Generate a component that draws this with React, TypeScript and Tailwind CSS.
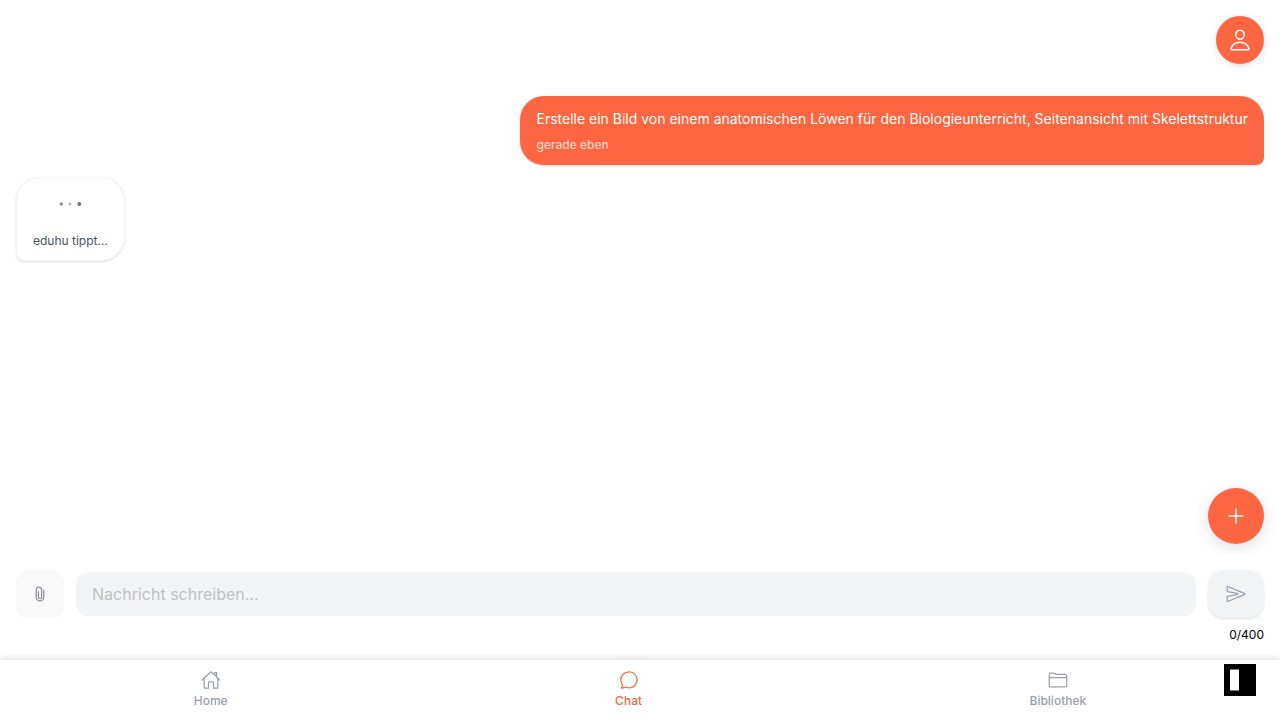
import { useState } from 'react'
import type { ComponentType } from 'react'
import {
  IoAddOutline,
  IoAttachOutline,
  IoChatbubbleOutline,
  IoFolderOutline,
  IoHomeOutline,
  IoPersonOutline,
  IoSendOutline,
} from 'react-icons/io5'

type Tab = {
  label: string
  href: string
  icon: ComponentType<{ className?: string }>
  active?: boolean
}

const tabs: Tab[] = [
  { label: 'Home', href: '#home', icon: IoHomeOutline },
  { label: 'Chat', href: '#chat', icon: IoChatbubbleOutline, active: true },
  { label: 'Bibliothek', href: '#bibliothek', icon: IoFolderOutline },
]

const MAX_LENGTH = 400

function UserMessage({ text, time }: { text: string; time: string }) {
  return (
    <div className="self-end rounded-3xl rounded-br-lg bg-[#fd6642] px-4 py-3 text-white shadow-sm">
      <p className="text-sm leading-[22px]">{text}</p>
      <p className="mt-1.5 text-xs leading-[17px] font-medium opacity-70">{time}</p>
    </div>
  )
}

function TypingIndicator() {
  return (
    <div className="flex flex-col items-center self-start rounded-3xl rounded-bl-lg border border-gray-100 bg-white px-4 pt-3 pb-2.5 shadow-sm">
      <svg className="h-7 w-7" viewBox="0 0 28 28" aria-hidden="true">
        <circle cx="5.3" cy="14" r="1.7" fill="#8c8c8c" />
        <circle cx="14" cy="14" r="1.5" fill="#b5b5b5" />
        <circle cx="23.3" cy="14" r="2" fill="#777777" />
      </svg>
      <p className="mt-3.5 text-xs leading-[18px] text-gray-600">eduhu tippt...</p>
    </div>
  )
}

function Composer() {
  const [text, setText] = useState('')
  return (
    <form className="bg-white px-4 pt-4 pb-4" onSubmit={(e) => e.preventDefault()}>
      <div className="flex items-center gap-3">
        <button
          type="button"
          aria-label="Datei anhängen"
          className="flex h-12 w-12 shrink-0 items-center justify-center rounded-xl bg-[#f9f9f9] text-[#8b909c]"
        >
          <IoAttachOutline className="h-5 w-5" />
        </button>
        <input
          type="text"
          aria-label="Nachricht"
          placeholder="Nachricht schreiben..."
          maxLength={MAX_LENGTH}
          value={text}
          onChange={(e) => setText(e.target.value)}
          className="h-11 min-w-0 flex-1 rounded-xl bg-gray-100 px-4 text-base text-gray-900 outline-none placeholder:text-[#c0c1c3]"
        />
        <button
          type="submit"
          aria-label="Senden"
          className="flex h-12 w-14 shrink-0 items-center justify-center rounded-2xl bg-gray-100 text-gray-400 shadow-sm"
        >
          <IoSendOutline className="h-5 w-5" />
        </button>
      </div>
      <p className="mt-2 text-right text-xs leading-[18px] text-black">
        {text.length}/{MAX_LENGTH}
      </p>
    </form>
  )
}

export default function App() {
  return (
    <div className="flex h-dvh flex-col bg-white font-['Inter',sans-serif]">
      <main className="relative flex min-h-0 flex-1 flex-col overflow-hidden">
        <header className="flex justify-end p-4">
          <button
            type="button"
            aria-label="Profil"
            className="flex h-12 w-12 items-center justify-center rounded-full bg-[#fd6642] text-white shadow-[0_2px_8px_rgba(0,0,0,0.12)]"
          >
            <IoPersonOutline className="h-6 w-6" />
          </button>
        </header>
        <section className="flex flex-1 flex-col gap-3 px-4 pt-4" aria-label="Chatverlauf">
          <UserMessage
            text="Erstelle ein Bild von einem anatomischen Löwen für den Biologieunterricht, Seitenansicht mit Skelettstruktur"
            time="gerade eben"
          />
          <TypingIndicator />
        </section>
        <button
          type="button"
          aria-label="Neuer Chat"
          className="absolute right-4 bottom-2.5 flex h-14 w-14 items-center justify-center rounded-full bg-[#fd6642] text-white shadow-[0_4px_16px_rgba(0,0,0,0.12)]"
        >
          <IoAddOutline className="h-6 w-6" />
        </button>
      </main>
      <Composer />
      <nav className="relative flex h-[60px] shrink-0 items-center justify-around bg-white shadow-[0_-1px_8px_rgba(0,0,0,0.15)]">
        {tabs.map(({ label, href, icon: Icon, active }) => (
          <a
            key={label}
            href={href}
            aria-current={active ? 'page' : undefined}
            className={`flex flex-col items-center text-xs font-medium ${active ? 'text-[#fd6642]' : 'text-gray-400'}`}
          >
            <Icon className="h-5 w-5" />
            <span className="mt-0.5 leading-[18px]">{label}</span>
          </a>
        ))}
        <button type="button" aria-label="Ansicht umschalten" className="absolute top-1 right-6 h-8 w-8 bg-black">
          <svg className="h-8 w-8" viewBox="0 0 32 32" aria-hidden="true">
            <rect x="6" y="5.5" width="9" height="21" fill="#ffffff" />
          </svg>
        </button>
      </nav>
    </div>
  )
}
